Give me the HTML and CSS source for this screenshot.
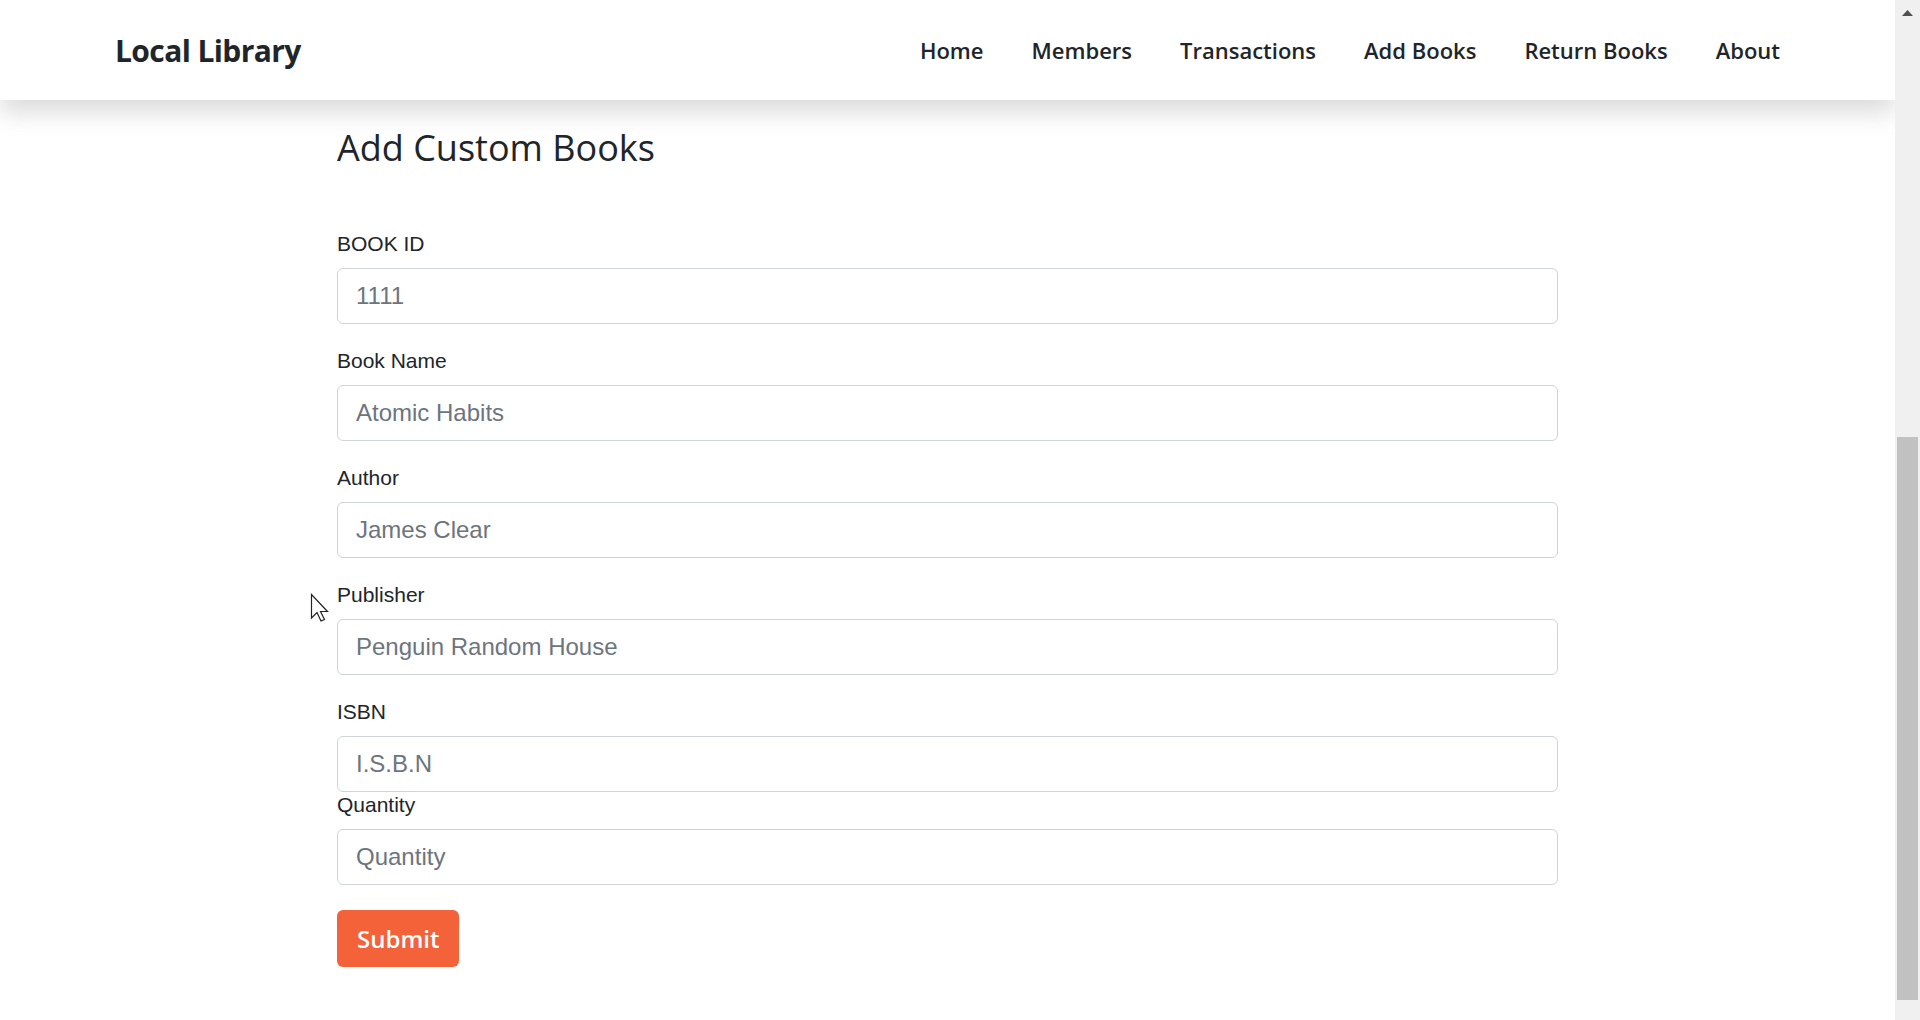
FILE: index.html
```html
<!DOCTYPE html>
<html lang="en">
<head>
<meta charset="utf-8">
<title>Local Library - Add Books</title>
<link rel="stylesheet" href="styles.css">
</head>
<body>
<div class="app">
  <div class="viewport">
    <header class="navbar">
      <a class="brand" href="#">Local Library</a>
      <nav class="nav">
        <a class="nav-link" href="#">Home</a>
        <a class="nav-link" href="#">Members</a>
        <a class="nav-link" href="#">Transactions</a>
        <a class="nav-link" href="#">Add Books</a>
        <a class="nav-link" href="#">Return Books</a>
        <a class="nav-link" href="#">About</a>
      </nav>
    </header>

    <main class="page">
      <div class="container">
        <h2 class="title">Add Custom Books</h2>
        <form class="book-form">
          <div class="field">
            <label class="field-label" for="bookId">BOOK ID</label>
            <input class="field-input" id="bookId" type="text" placeholder="1111">
          </div>
          <div class="field">
            <label class="field-label" for="bookName">Book Name</label>
            <input class="field-input" id="bookName" type="text" placeholder="Atomic Habits">
          </div>
          <div class="field">
            <label class="field-label" for="author">Author</label>
            <input class="field-input" id="author" type="text" placeholder="James Clear">
          </div>
          <div class="field">
            <label class="field-label" for="publisher">Publisher</label>
            <input class="field-input" id="publisher" type="text" placeholder="Penguin Random House">
          </div>
          <div class="field field-tight">
            <label class="field-label" for="isbn">ISBN</label>
            <input class="field-input" id="isbn" type="text" placeholder="I.S.B.N">
          </div>
          <div class="field field-last">
            <label class="field-label" for="quantity">Quantity</label>
            <input class="field-input" id="quantity" type="text" placeholder="Quantity">
          </div>
          <button class="btn-submit" type="button">Submit</button>
        </form>
      </div>
    </main>

    <div class="cursor" aria-hidden="true">
      <svg width="20" height="30" viewBox="0 0 20 30">
        <path d="M1.5 1.5 L1.5 25 L7 19.5 L11 28 L14.5 26.5 L10.5 18.5 L17.5 18.5 Z" fill="#ffffff" stroke="#222" stroke-width="1.2" stroke-linejoin="miter"/>
      </svg>
    </div>
  </div>

  <div class="scrollbar" aria-hidden="true">
    <div class="scroll-btn">
      <svg width="11" height="6" viewBox="0 0 11 6"><path d="M0 6 L5.5 0 L11 6 Z" fill="#505050"/></svg>
    </div>
    <div class="scroll-track">
      <div class="scroll-thumb"></div>
    </div>
  </div>
</div>
</body>
</html>
```

FILE: styles.css
```css
html,
body {
  margin: 0;
  height: 100%;
  overflow: hidden;
}

body {
  background: #ffffff;
  color: #212529;
  font-family: "Liberation Sans", Arial, sans-serif;
}

.app {
  display: flex;
  height: 100vh;
}

.viewport {
  flex: 1;
  min-width: 0;
  position: relative;
  overflow: hidden;
  background: #ffffff;
}

/* ---------- Scrollbar (browser chrome) ---------- */
.scrollbar {
  width: 25px;
  flex: none;
  display: flex;
  flex-direction: column;
  background: #f0f0f0;
}

.scroll-btn {
  height: 25px;
  flex: none;
  display: flex;
  align-items: center;
  justify-content: center;
  line-height: 0;
}

.scroll-track {
  flex: 1;
  display: flex;
  flex-direction: column;
  justify-content: flex-end;
  padding: 0 2px 20px;
}

.scroll-thumb {
  height: 563px;
  background: #c1c1c1;
}

/* ---------- Navbar ---------- */
.navbar {
  position: relative;
  z-index: 10;
  height: 100px;
  padding: 0 115px;
  display: flex;
  align-items: center;
  justify-content: space-between;
  background: #ffffff;
  box-shadow: 0 12px 24px rgba(0, 0, 0, 0.15);
}

.brand {
  font-family: "Open Sans", "Noto Sans", sans-serif;
  font-weight: 700;
  font-size: 30px;
  color: #212529;
  text-decoration: none;
  letter-spacing: -0.6px;
}

.nav {
  display: flex;
  align-items: center;
  gap: 48px;
}

.nav-link {
  font-family: "Open Sans", "Noto Sans", sans-serif;
  font-weight: 600;
  font-size: 22px;
  color: #212529;
  text-decoration: none;
}

/* ---------- Page ---------- */
.page {
  padding-top: 26px;
}

.container {
  width: 1221px;
  margin: 0 auto;
}

.title {
  margin: 0 0 60px;
  font-family: "Open Sans", "Noto Sans", sans-serif;
  font-weight: 400;
  font-size: 36px;
  line-height: 43.2px;
  color: #212529;
}

.book-form {
  margin: 0;
}

.field {
  margin-bottom: 22px;
}

.field-tight {
  margin-bottom: -2px;
}

.field-last {
  margin-bottom: 25px;
}

.field-label {
  display: block;
  margin-bottom: 9px;
  font-size: 21px;
  line-height: 30px;
  color: #212529;
}

.field-input {
  display: block;
  box-sizing: border-box;
  width: 100%;
  height: 56px;
  margin: 0;
  padding: 0 18px;
  border: 1px solid #ced4da;
  border-radius: 6px;
  background: #ffffff;
  font-family: "Liberation Sans", Arial, sans-serif;
  font-size: 24px;
  color: #212529;
  outline: none;
}

.field-input::placeholder {
  color: #6c757d;
  opacity: 1;
}

.btn-submit {
  display: block;
  height: 57px;
  margin: 0;
  padding: 0 20px;
  border: none;
  border-radius: 6px;
  background: #f4623a;
  color: #ffffff;
  font-family: "Open Sans", "Noto Sans", sans-serif;
  font-weight: 600;
  font-size: 24px;
  cursor: pointer;
}

/* mouse pointer captured in the screenshot */
.cursor {
  position: absolute;
  left: 310px;
  top: 593px;
  z-index: 20;
  line-height: 0;
}
```
